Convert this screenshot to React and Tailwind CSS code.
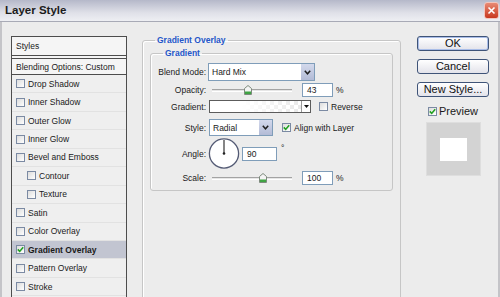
import React from "react";

const Check = ({ checked }) => (
  <div className="w-[9px] h-[9px] shrink-0 border border-[#7b8aa3] bg-[linear-gradient(135deg,#dcdcdc,#ffffff)] flex items-center justify-center">
    {checked && (
      <svg width="7" height="7" viewBox="0 0 7 7">
        <path d="M0.8 3.4 L2.7 5.4 L6.2 1.2" fill="none" stroke="#21a121" strokeWidth="1.6" />
      </svg>
    )}
  </div>
);

const Chevron = () => (
  <svg width="7" height="5" viewBox="0 0 7 5">
    <path d="M0.8 0.8 L3.5 3.8 L6.2 0.8" fill="none" stroke="#1e1e1e" strokeWidth="1.5" />
  </svg>
);

const Thumb = ({ cls }) => (
  <svg className={cls} width="8" height="10" viewBox="0 0 8 10">
    <path d="M0.5 3.5 L4 0.5 L7.5 3.5 V9.5 H0.5 Z" fill="#f4f4f4" stroke="#7d8a7d" />
    <rect x="1" y="6.5" width="6" height="2.5" fill="#3fa443" />
  </svg>
);

const Slider = ({ thumbLeft }) => (
  <div className="relative w-[80px] h-full flex items-center ml-[6px]">
    <div className="w-full h-[3px] border-t border-[#a3a3a3] border-b border-b-white bg-[#e6e6e6]" />
    <Thumb cls={`absolute top-[2px] ${thumbLeft}`} />
  </div>
);

const items = [
  { t: "Drop Shadow" },
  { t: "Inner Shadow" },
  { t: "Outer Glow" },
  { t: "Inner Glow" },
  { t: "Bevel and Emboss" },
  { t: "Contour", sub: true },
  { t: "Texture", sub: true },
  { t: "Satin" },
  { t: "Color Overlay" },
  { t: "Gradient Overlay", on: true },
  { t: "Pattern Overlay" },
  { t: "Stroke" },
];

const Label = ({ children }) => (
  <div className="w-[55px] text-right shrink-0">{children}</div>
);

const Btn = ({ children, def }) => (
  <div
    className={`w-[72px] h-[15px] rounded-[3px] border border-[#3f5478] bg-[linear-gradient(#ffffff,#e3e3ea)] flex items-center justify-center text-[11px] leading-none text-[#111] ${
      def ? "shadow-[inset_0_0_0_1px_#a9bde8]" : ""
    }`}
  >
    {children}
  </div>
);

export default function App() {
  return (
    <div className="w-[500px] h-[297px] overflow-hidden bg-[#ececec] flex flex-col font-['Liberation_Sans',Arial,sans-serif] text-[#1a1a1a]">
      {/* Title bar */}
      <div className="h-[22px] shrink-0 flex items-center justify-between bg-[linear-gradient(#b5b8c9,#dfe0e8_60%,#eeeff3)] border-b border-[#a8aab6]">
        <div className="pl-[5px] text-[11.5px] font-bold text-[#1c1c1c] leading-none">Layer Style</div>
        <div className="mr-[1px] w-[15px] h-[17px] rounded-[3px] border border-[#f3c5bd] bg-[linear-gradient(#e88a74,#c8381f)] flex items-center justify-center">
          <svg width="9" height="9" viewBox="0 0 9 9">
            <path d="M1.5 1.5 L7.5 7.5 M7.5 1.5 L1.5 7.5" stroke="#fff" strokeWidth="1.6" />
          </svg>
        </div>
      </div>

      {/* Body */}
      <div className="flex-1 flex border-l-2 border-r-2 border-[#c4c4c8] text-[8.5px] leading-[10px]">
        {/* Left list */}
        <div className="ml-[9px] mt-[14px] w-[116px] h-[280px] shrink-0 border border-[#4d4d4d] bg-[#efefef] flex flex-col">
          <div className="h-[19px] shrink-0 flex items-center pl-[4px] border-b border-[#4d4d4d] bg-[#f5f5f5]">Styles</div>
          <div className="h-[2px] shrink-0 bg-[#f5f5f5]" />
          <div className="h-[17px] shrink-0 flex items-center pl-[4px] border-t border-b border-[#4d4d4d] bg-[#f5f5f5]">
            Blending Options: Custom
          </div>
          {items.map((it) => (
            <div
              key={it.t}
              className={`h-[18.45px] shrink-0 flex items-center gap-[3px] border-b border-[#e2e2e2] ${
                it.sub ? "pl-[15px]" : "pl-[4px]"
              } ${it.on ? "bg-[#c2c5d1] font-bold" : ""}`}
            >
              <Check checked={it.on} />
              <span>{it.t}</span>
            </div>
          ))}
        </div>

        {/* Middle */}
        <fieldset className="ml-[15px] mt-[13px] w-[259px] h-[280px] shrink-0 border border-[#c6c6c6] rounded-[3px] shadow-[inset_1px_1px_0_#fff]">
          <legend className="ml-[12px] px-[2px] font-bold text-[#2456c8] leading-[10px]">Gradient Overlay</legend>
          <fieldset className="ml-[7px] mt-[3px] w-[243px] border border-[#c6c6c6] rounded-[3px] pt-[5px] pb-[5px] shadow-[inset_1px_1px_0_#fff]">
            <legend className="ml-[12px] px-[2px] font-bold text-[#2456c8] leading-[10px]">Gradient</legend>

            {/* Blend mode */}
            <div className="h-[18px] flex items-center">
              <Label>Blend Mode:</Label>
              <div className="ml-[2px] w-[107px] h-[18px] border border-[#7f9db9] bg-white flex items-center">
                <span className="flex-1 pl-[3px]">Hard Mix</span>
                <div className="w-[13px] h-full bg-[linear-gradient(#d3d9ec,#b3bbd6)] flex items-center justify-center">
                  <Chevron />
                </div>
              </div>
            </div>

            {/* Opacity */}
            <div className="mt-[2px] h-[14px] flex items-center">
              <Label>Opacity:</Label>
              <Slider thumbLeft="left-[32px]" />
              <div className="ml-[10px] w-[31px] h-[14px] border border-[#7f9db9] bg-white flex items-center pl-[4px]">43</div>
              <span className="ml-[3px]">%</span>
            </div>

            {/* Gradient */}
            <div className="mt-[3px] h-[13px] flex items-center">
              <Label>Gradient:</Label>
              <div className="ml-[3px] w-[102px] h-[13px] border border-[#5c5c5c] bg-white flex">
                <div className="flex-1 h-full bg-[conic-gradient(#e3e3e3_25%,#ffffff_0_50%,#e3e3e3_0_75%,#ffffff_0)] bg-[length:8px_8px]">
                  <div className="w-full h-full bg-[linear-gradient(to_right,#ffffff_35%,rgba(255,255,255,0.2))]" />
                </div>
                <div className="w-[9px] h-full border-l border-[#9a9a9a] flex items-center justify-center">
                  <svg width="5" height="3" viewBox="0 0 5 3">
                    <polygon points="0,0 5,0 2.5,3" fill="#111" />
                  </svg>
                </div>
              </div>
              <div className="ml-[8px]">
                <Check />
              </div>
              <span className="ml-[3px]">Reverse</span>
            </div>

            {/* Style */}
            <div className="mt-[6px] h-[17px] flex items-center">
              <Label>Style:</Label>
              <div className="ml-[3px] w-[64px] h-[17px] border border-[#7f9db9] bg-white flex items-center">
                <span className="flex-1 pl-[3px]">Radial</span>
                <div className="w-[13px] h-full bg-[linear-gradient(#d3d9ec,#b3bbd6)] flex items-center justify-center">
                  <Chevron />
                </div>
              </div>
              <div className="ml-[9px]">
                <Check checked />
              </div>
              <span className="ml-[3px]">Align with Layer</span>
            </div>

            {/* Angle */}
            <div className="mt-[2px] h-[31px] flex items-center">
              <Label>Angle:</Label>
              <svg className="ml-[2px] shrink-0" width="32" height="31" viewBox="0 0 32 31">
                <circle cx="16" cy="15.5" r="14.6" fill="#fff" stroke="#535a74" strokeWidth="1.3" />
                <line x1="16" y1="15.5" x2="16" y2="2" stroke="#222" strokeWidth="1.1" />
                <circle cx="16" cy="15.5" r="1.3" fill="#222" />
              </svg>
              <div className="ml-[2px] w-[35px] h-[14px] border border-[#7f9db9] bg-white flex items-center pl-[4px]">90</div>
              <span className="ml-[4px] self-start mt-[5px]">°</span>
            </div>

            {/* Scale */}
            <div className="mt-[2px] h-[14px] flex items-center">
              <Label>Scale:</Label>
              <Slider thumbLeft="left-[47px]" />
              <div className="ml-[10px] w-[31px] h-[14px] border border-[#7f9db9] bg-white flex items-center pl-[4px]">100</div>
              <span className="ml-[3px]">%</span>
            </div>
          </fieldset>
        </fieldset>

        {/* Right column */}
        <div className="flex-1 pl-[7px] flex flex-col items-center">
          <div className="mt-[14px] flex flex-col gap-[8px]">
            <Btn def>OK</Btn>
            <Btn>Cancel</Btn>
            <Btn>New Style...</Btn>
          </div>
          <div className="mt-[8px] h-[12px] flex items-center gap-[2px]">
            <Check checked />
            <span className="text-[11px] leading-none">Preview</span>
          </div>
          <div className="mt-[5px] w-[55px] h-[54px] bg-[#d3d3d3] border border-[#dedede] flex items-center justify-center">
            <div className="w-[27px] h-[23px] bg-white" />
          </div>
        </div>
      </div>
    </div>
  );
}
